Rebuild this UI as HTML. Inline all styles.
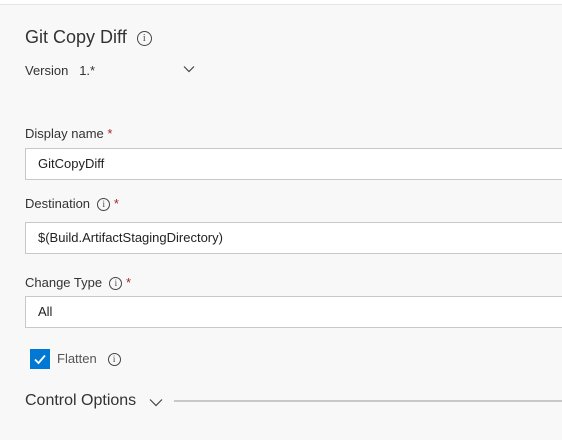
<html><head><style>
body{margin:0;width:562px;height:440px;background:#f8f8f8;font-family:"Liberation Sans",sans-serif;color:#333;position:relative;overflow:hidden}
.a{position:absolute;white-space:nowrap}
.top{position:absolute;left:0;top:0;width:562px;height:4px;background:#fff;border-bottom:1px solid #e6e6e6}
.inp{position:absolute;left:25px;width:560px;height:30px;background:#fff;border:1px solid #c8c8c8}
.inp span{position:absolute;left:12px;top:7px;font-size:13px;color:#222}
.lbl{font-size:13px;color:#333}
.st{color:#a4262c}
.i{display:inline-block;width:11px;height:11px;border:1px solid #444;border-radius:50%;font-size:9px;line-height:11px;text-align:center;color:#444;vertical-align:middle;font-family:"Liberation Serif",serif}
</style></head><body>
<div class="top"></div>
<div class="a" style="left:25px;top:27px;font-size:18px;color:#333">Git Copy Diff<span class="i" style="width:13px;height:13px;line-height:13px;font-size:10px;margin-left:10px;vertical-align:2px">i</span></div>
<div class="a lbl" style="left:25px;top:63px">Version&nbsp;&nbsp; 1.*</div>
<svg class="a" style="left:183px;top:65px" width="12" height="8"><path d="M1 1.5L6 6.5L11 1.5" stroke="#444" fill="none" stroke-width="1.2"/></svg>
<div class="a lbl" style="left:25px;top:126px">Display name <span class="st">*</span></div>
<div class="inp" style="top:148px"><span>GitCopyDiff</span></div>
<div class="a lbl" style="left:25px;top:196px">Destination &nbsp;<span class="i">i</span> <span class="st">*</span></div>
<div class="inp" style="top:222px"><span>$(Build.ArtifactStagingDirectory)</span></div>
<div class="a lbl" style="left:25px;top:275px">Change Type &nbsp;<span class="i">i</span> <span class="st">*</span></div>
<div class="inp" style="top:296px"><span>All</span></div>
<div class="a" style="left:30px;top:349px;width:20px;height:20px;background:#0078d4"><svg width="20" height="20"><path d="M5 10.5L8.5 14L15 6.5" stroke="#fff" fill="none" stroke-width="1.8"/></svg></div>
<div class="a lbl" style="left:57px;top:351px;color:#555">Flatten &nbsp;&nbsp;<span class="i">i</span></div>
<div class="a" style="left:25px;top:392px;font-size:16px;color:#333">Control Options</div>
<svg class="a" style="left:149px;top:398px" width="14" height="9"><path d="M1 1.5L7 7.5L13 1.5" stroke="#444" fill="none" stroke-width="1.2"/></svg>
<div class="a" style="left:174px;top:400px;width:400px;height:2px;background:#c8c8c8"></div>
</body></html>
